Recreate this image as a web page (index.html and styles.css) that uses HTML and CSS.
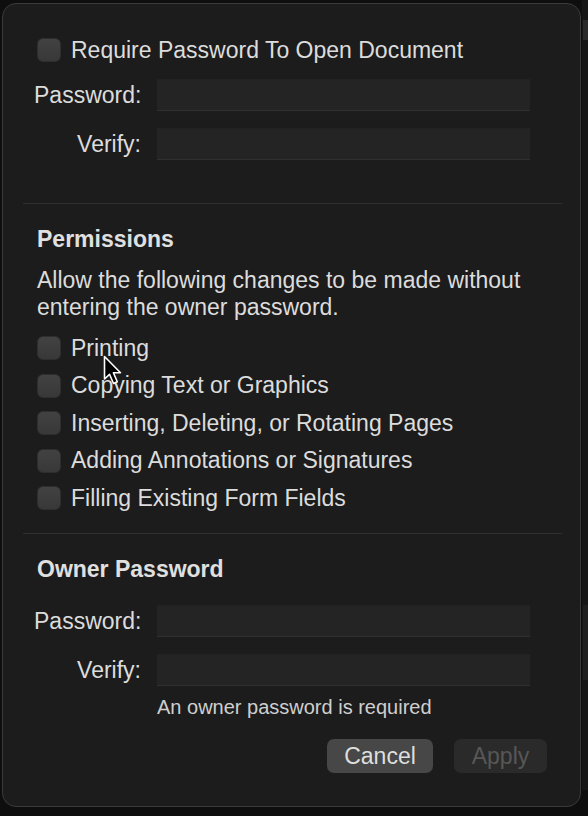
FILE: index.html
```html
<!DOCTYPE html>
<html>
<head>
<meta charset="utf-8">
<link rel="stylesheet" href="styles.css">
</head>
<body>
<div class="side-strip">
  <div class="strip-bit top"></div>
  <div class="strip-bit mid"></div>
</div>
<div class="window">
  <div class="section first">
    <label class="check-row">
      <span class="checkbox"></span>
      <span class="check-text">Require Password To Open Document</span>
    </label>
    <div class="field-row">
      <span class="field-label">Password:</span>
      <span class="field"></span>
    </div>
    <div class="field-row">
      <span class="field-label">Verify:</span>
      <span class="field"></span>
    </div>
  </div>

  <div class="separator sep1"></div>

  <div class="section perms">
    <h2 class="heading">Permissions</h2>
    <p class="desc">Allow the following changes to be made without entering the owner password.</p>
    <div class="check-list">
      <label class="check-row list"><span class="checkbox"></span><span class="check-text">Printing</span></label>
      <label class="check-row list"><span class="checkbox"></span><span class="check-text">Copying Text or Graphics</span></label>
      <label class="check-row list"><span class="checkbox"></span><span class="check-text">Inserting, Deleting, or Rotating Pages</span></label>
      <label class="check-row list"><span class="checkbox"></span><span class="check-text">Adding Annotations or Signatures</span></label>
      <label class="check-row list"><span class="checkbox"></span><span class="check-text">Filling Existing Form Fields</span></label>
    </div>
  </div>

  <div class="separator sep2"></div>

  <div class="section owner">
    <h2 class="heading">Owner Password</h2>
    <div class="field-row o1">
      <span class="field-label">Password:</span>
      <span class="field"></span>
    </div>
    <div class="field-row">
      <span class="field-label">Verify:</span>
      <span class="field"></span>
    </div>
    <div class="note">An owner password is required</div>
  </div>

  <div class="buttons">
    <button class="btn cancel">Cancel</button>
    <button class="btn apply" disabled>Apply</button>
  </div>

  <svg class="cursor" width="22" height="32" viewBox="0 0 22 32">
    <path d="M1.5 1.5 L1.5 24 L6.5 19.3 L10.5 28.5 L14.3 26.8 L10.4 17.8 L17.5 17.8 Z" fill="#000" stroke="#fff" stroke-width="1.6" stroke-linejoin="round"/>
  </svg>
</div>
</body>
</html>
```

FILE: styles.css
```css
html, body {
  margin: 0;
  padding: 0;
}

body {
  background: #0e0e0e;
  font-family: "Liberation Sans", Arial, sans-serif;
  font-size: 23px;
  color: #dcdcdc;
  width: 588px;
  height: 816px;
  overflow: hidden;
  position: relative;
}

.side-strip {
  position: absolute;
  right: 0;
  top: 0;
  width: 6px;
  height: 790px;
  background: #161616;
}

.strip-bit {
  position: absolute;
  left: 1px;
  width: 5px;
  background: #2a2a2a;
}

.strip-bit.top {
  top: 20px;
  height: 20px;
}

.strip-bit.mid {
  top: 605px;
  height: 75px;
  background: #1f1f1f;
}

.window {
  position: relative;
  margin: 3px 0 0 2px;
  width: 579px;
  height: 804px;
  box-sizing: border-box;
  border: 1.5px solid #3a3a3a;
  border-radius: 14px;
  background: #1c1c1c;
  padding: 0 33px 0 34px;
}

.section.first {
  padding-top: 34px;
}

.check-row {
  display: flex;
  align-items: center;
  height: 24px;
  gap: 10px;
  line-height: 27px;
}

.check-row.list {
  height: 37.5px;
}

.checkbox {
  width: 24px;
  height: 24px;
  box-sizing: border-box;
  border-radius: 6px;
  background: linear-gradient(#424242, #383838);
  border: 1px solid #2e2e2e;
  flex: none;
}

.field-row {
  display: grid;
  grid-template-columns: 107px 373px;
  column-gap: 16px;
  align-items: center;
  height: 32px;
  margin-top: 17px;
  margin-left: -3px;
}

.field-row.o1 {
  margin-top: 22px;
}

.field-label {
  text-align: right;
  white-space: nowrap;
}

.field {
  display: block;
  height: 32px;
  box-sizing: border-box;
  background: #242424;
  border-top: 1px solid #222;
  border-bottom: 1px solid #303030;
}

.separator {
  height: 1px;
  background: #2f2f2f;
  margin-left: -14px;
  margin-right: -15px;
}

.sep1 {
  margin-top: 43px;
}

.sep2 {
  margin-top: 16px;
}

.heading {
  margin: 0;
  font-size: 23px;
  font-weight: bold;
  line-height: 27px;
  color: #e0e0e0;
}

.perms .heading {
  margin-top: 21.5px;
}

.owner .heading {
  margin-top: 22px;
}

.desc {
  margin: 14px 0 0;
  line-height: 27px;
  width: 505px;
}

.check-list {
  margin-top: 9px;
}

.note {
  margin: 9px 0 0 120px;
  font-size: 20px;
  line-height: 24px;
  color: #cfcfcf;
}

.buttons {
  display: flex;
  justify-content: flex-end;
  gap: 21px;
  margin-top: 20px;
}

.btn {
  height: 34px;
  border: none;
  border-radius: 7px;
  font-family: "Liberation Sans", Arial, sans-serif;
  font-size: 23px;
  padding: 0;
}

.cancel {
  width: 106px;
  background: #474747;
  color: #dedede;
}

.apply {
  width: 93px;
  background: #2a2a2a;
  color: #575757;
}

.cursor {
  position: absolute;
  left: 100px;
  top: 351px;
}
```
